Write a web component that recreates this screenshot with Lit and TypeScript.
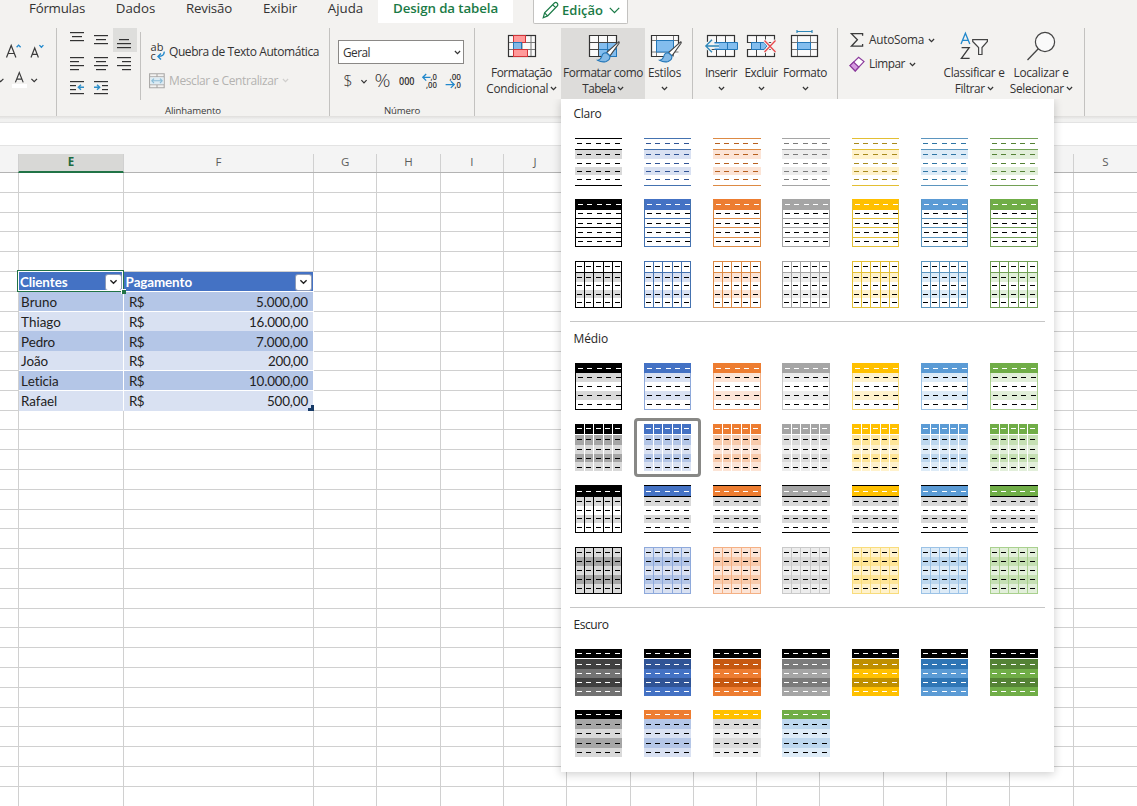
import { LitElement, html, svg, css, nothing } from "lit";
import { customElement, property } from "lit/decorators.js";
import { classMap } from "lit/directives/class-map.js";

/** A single-line caption whose tracking is adjusted to fill a given width. */
@customElement("ui-label")
class UiLabel extends LitElement {
  @property() text = "";
  @property({ type: Number }) w = 0;
  static styles = css`
    :host { display: inline-block; white-space: pre; flex: none; }
    .t { display: inline-block; font-kerning: none; font-variant-ligatures: none; }
  `;
  firstUpdated() {
    const el = this.renderRoot.querySelector(".t") as HTMLElement;
    const natural = el.getBoundingClientRect().width;
    if (!this.w || !natural) return;
    el.style.letterSpacing = `${(this.w - natural) / this.text.length}px`;
  }
  render() {
    return html`<span class="t">${this.text}</span>`;
  }
}

const label = (text: string, w: number) => html`<ui-label .text=${text} .w=${w}></ui-label>`;

/* ---------- table style thumbnails ---------- */

interface Accent { base: string; light: string; mid: string; edge: string; dark: string; ink: string; }

const ACCENTS: Accent[] = [
  { base: "#000", light: "#d9d9d9", mid: "#a6a6a6", edge: "#000", dark: "#404040", ink: "#000" },
  { base: "#4472c4", light: "#d9e1f2", mid: "#b4c6e7", edge: "#8ea9db", dark: "#305496", ink: "#305496" },
  { base: "#ed7d31", light: "#fce4d6", mid: "#f8cbad", edge: "#f4b084", dark: "#c65911", ink: "#b8601f" },
  { base: "#a5a5a5", light: "#ededed", mid: "#dbdbdb", edge: "#c9c9c9", dark: "#7b7b7b", ink: "#7b7b7b" },
  { base: "#ffc000", light: "#fff2cc", mid: "#ffe699", edge: "#f8dc7c", dark: "#bf8f00", ink: "#a98a1c" },
  { base: "#5b9bd5", light: "#ddebf7", mid: "#bdd7ee", edge: "#9bc2e6", dark: "#2f75b5", ink: "#2f75a5" },
  { base: "#70ad47", light: "#e2efda", mid: "#c6e0b4", edge: "#a9d08e", dark: "#548235", ink: "#548235" },
];
const LINES = ["#000", "#4472b0", "#dd8a44", "#a5a5a5", "#e3bf34", "#5b95bf", "#72a055"];
const WIDTHS = [47, 47, 48, 48, 47, 47, 48];

const box = (x: number, y: number, w: number, h: number, fill: string) =>
  svg`<rect x=${x} y=${y} width=${w} height=${h} fill=${fill}></rect>`;

const dashes = (y: number, fill: string, x0 = 2) =>
  [0, 9, 19, 28, 38].map((dx) => box(x0 + dx, y, 5, 1, fill));

const frame = (w: number, h: number, c: string) => [
  box(0, 0, w, 1, c), box(0, h - 1, w, 1, c), box(0, 0, 1, h, c), box(w - 1, 0, 1, h, c),
];

const verticals = (y: number, h: number, c: string) => [9, 18, 28, 37].map((x) => box(x, y, 1, h, c));

type Kind = "light1" | "light2" | "light3" | "medium1" | "medium2" | "medium3" | "medium4" | "dark1" | "dark2";

function thumb(kind: Kind, i: number) {
  const a = ACCENTS[i], w = WIDTHS[i], ln = LINES[i];
  switch (kind) {
    case "light1":
      return [box(0, 12, w, 9, a.light), box(0, 29, w, 8, a.light),
        box(0, 0, w, 1, ln), box(0, 11, w, 1, ln), box(0, 47, w, 1, ln),
        [5, 16, 25, 33, 41].map((y) => dashes(y, a.ink))];
    case "light2":
      return [box(0, 0, w, 11, a.base), frame(w, 48, i ? ln : "#000"), box(0, 0, w, 1, a.base),
        [19, 28, 38].map((y) => box(0, y, w, 1, ln)),
        dashes(5, "#fff", 3), [14, 24, 33, 42].map((y) => dashes(y, "#000", 3))];
    case "light3":
      return [box(0, 12, w, 9, a.light), box(0, 29, w, 8, a.light), frame(w, 47, ln),
        box(0, 11, w, 1, ln), verticals(0, 47, ln),
        [5, 16, 24, 33, 41].map((y) => dashes(y, "#000"))];
    case "medium1":
      return [box(0, 10, w, 9, a.light), box(0, 28, w, 9, a.light), frame(w, 47, a.edge),
        box(0, 0, w, 10, a.base),
        dashes(5, "#fff", 3), [14, 23, 32, 41].map((y) => dashes(y, "#000", 3))];
    case "medium2":
      return [box(0, 0, w, 10, a.base), box(0, 11, w, 10, a.mid), box(0, 21, w, 9, a.light),
        box(0, 30, w, 8, a.mid), box(0, 38, w, 9, a.light), verticals(0, 47, "#fff"),
        dashes(4, "#fff"), [15, 25, 34, 43].map((y) => dashes(y, "#000"))];
    case "medium3":
      return [box(0, 0, w, 11, a.base), box(0, 12, w, 9, "#d9d9d9"), box(0, 30, w, 8, "#d9d9d9"),
        box(0, 0, w, 1, "#000"), box(0, 11, w, 1, "#000"), box(0, 47, w, 1, "#000"),
        i === 0 ? [frame(w, 48, "#000"), verticals(12, 36, "#000")] : nothing,
        dashes(6, "#fff"), [16, 25, 33, 42].map((y) => dashes(y, "#000"))];
    case "medium4":
      return [box(0, 0, w, 47, a.light), box(0, 10, w, 9, a.mid), box(0, 28, w, 9, a.mid),
        frame(w, 47, a.edge), verticals(0, 47, a.edge),
        [5, 14, 23, 32, 41].map((y) => dashes(y, "#000"))];
    case "dark1": {
      const hi = i === 0 ? "#737373" : a.base;
      return [box(0, 0, w, 9, "#000"), box(0, 10, w, 10, a.dark), box(0, 20, w, 9, hi),
        box(0, 29, w, 9, a.dark), box(0, 38, w, 9, hi),
        [4, 15, 24, 33, 42].map((y) => dashes(y, "#fff"))];
    }
    case "dark2": {
      const head = ["#000", "#ed7d31", "#ffc000", "#70ad47"][i];
      const b = ACCENTS[[0, 1, 3, 5][i]];
      return [box(0, 0, w, 9, head), box(0, 9, w, 10, b.mid), box(0, 19, w, 9, b.light),
        box(0, 28, w, 10, b.mid), box(0, 38, w, 9, b.light),
        dashes(4, "#fff"), [14, 23, 33, 42].map((y) => dashes(y, "#000"))];
    }
  }
}

@customElement("style-gallery")
class StyleGallery extends LitElement {
  static styles = css`
    :host { display: block; box-sizing: border-box; width: 493px; height: 673px; background: #fff;
      box-shadow: 0 2px 9px rgba(0, 0, 0, 0.2); clip-path: inset(0 -14px -14px -14px); padding: 0 9px; }
    section { display: flow-root; border-bottom: 1px solid #c6c6c6; box-sizing: border-box; }
    .claro { height: 223px; }
    .medio { height: 286px; }
    .escuro { height: 160px; border: 0; }
    h3 { margin: 7px 0 0 3.5px; height: 16px; font: 400 12px/16px "Open Sans", "Noto Sans", sans-serif; color: #262626; }
    .medio h3 { margin-top: 9px; }
    .escuro h3 { margin-top: 9px; }
    .grid { display: grid; grid-template-columns: 69px 69px 69px 70px 69px 69px 48px; margin: 16px 0 0 5px; }
    .claro .grid { grid-template-rows: 61px 62px 48px; }
    .medio .grid { grid-template-rows: 61px 61px 62px 48px; }
    .escuro .grid { grid-template-rows: 61px 48px; }
    .item { display: block; width: 48px; height: 48px; }
    .item svg { display: block; shape-rendering: crispEdges; }
    .item.on { outline: 3px solid #888886; outline-offset: 0; width: 61px; height: 53px; margin: -3px 0 0 -7px;
      padding: 3px 0 0 7px; box-sizing: border-box; border-radius: 1px; }
  `;
  private section(name: string, cls: string, w: number, kinds: Kind[]) {
    return html`<section class=${cls}>
      <h3>${label(name, w)}</h3>
      <div class="grid">
        ${kinds.map((k) => (k === "dark2" ? [0, 1, 2, 3] : [0, 1, 2, 3, 4, 5, 6]).map(
          (i) => html`<div class=${classMap({ item: true, on: k === "medium2" && i === 1 })}>
            <svg width="48" height="48" viewBox="0 0 48 48">${thumb(k, i)}</svg>
          </div>`))}
      </div>
    </section>`;
  }
  render() {
    return html`
      ${this.section("Claro", "claro", 28, ["light1", "light2", "light3"])}
      ${this.section("Médio", "medio", 34.5, ["medium1", "medium2", "medium3", "medium4"])}
      ${this.section("Escuro", "escuro", 35, ["dark1", "dark2"])}`;
  }
}

/* ---------- ribbon ---------- */

const chev = (color = "#333") => html`<svg class="chev" width="7" height="5" viewBox="0 0 7 5">
  <path d="M.9 1 3.5 3.6 6.1 1" fill="none" stroke=${color} stroke-width="1.2"/></svg>`;

const hline = (x: number, y: number, w: number, c = "#333") => svg`<rect x=${x} y=${y} width=${w} height="1.2" fill=${c}></rect>`;

const alignIcons = [
  { on: false, art: [hline(5, 4, 14), hline(7, 8, 10), hline(5, 12, 14)] },
  { on: false, art: [hline(5, 7, 14), hline(7, 11, 10), hline(5, 15, 14)] },
  { on: true, art: [hline(6, 11, 10), hline(4, 15, 14), hline(4, 19, 14)] },
  { on: false, art: [hline(5, 5, 14), hline(5, 9, 9), hline(5, 13, 14), hline(5, 17, 9)] },
  { on: false, art: [hline(5, 5, 14), hline(7, 9, 10), hline(5, 13, 14), hline(7, 17, 10)] },
  { on: false, art: [hline(4, 5, 14), hline(9, 9, 9), hline(4, 13, 14), hline(9, 17, 9)] },
  { on: false, art: [hline(5, 5, 14), hline(5, 9, 6), hline(5, 13, 6), hline(5, 17, 14),
    svg`<path d="M19 11.3H13.5M16 8.8 13.3 11.3 16 13.8" fill="none" stroke="#2e8fc9" stroke-width="1.4"/>`] },
  { on: false, art: [hline(5, 5, 14), hline(13, 9, 6), hline(13, 13, 6), hline(5, 17, 14),
    svg`<path d="M5 11.3H10.5M8 8.8 10.7 11.3 8 13.8" fill="none" stroke="#2e8fc9" stroke-width="1.4"/>`] },
];

const brush = svg`
  <path d="M33.6 13.8 21.6 24.6 25 27.8 34 15.2Q34.6 13.6 33.6 13.8Z" fill="#fff" stroke="#444" stroke-width="1.1"/>
  <path d="M21.4 24.8Q17.6 24.6 16.8 28.4 15.6 31.8 12.6 32.2 17 34.8 21.2 33.4 25.6 31.6 24.8 27.8Z" fill="#83b9e6" stroke="#2477b8" stroke-width="1.1"/>`;

const icons = {
  conditional: svg`<rect x="4.5" y="7.5" width="27" height="21" fill="#fafafa"/>
    <path d="M9.5 7.5V28.5M18 7.5V28.5M27 7.5V28.5M4.5 14.5H31.5M4.5 21.5H31.5" stroke="#777" fill="none"/>
    <rect x="4.5" y="7.5" width="27" height="21" fill="none" stroke="#333" stroke-width="1.2"/>
    <rect x="9.5" y="7.5" width="12" height="7" fill="#ff9a9a" stroke="#d13438"/>
    <rect x="9.5" y="14.5" width="8" height="7" fill="#83b9e6" stroke="#2477b8"/>
    <rect x="9.5" y="21.5" width="14" height="7" fill="#ff9a9a" stroke="#d13438"/>`,
  table: svg`<rect x="4.5" y="7.5" width="27" height="21" fill="#fafafa"/>
    <rect x="13.5" y="14.5" width="18" height="14" fill="#83bdee" stroke="#2477b8"/>
    <path d="M13.5 7.5V28.5M22.5 7.5V14M4.5 14.5H31.5M4.5 21.5H13" stroke="#444" fill="none"/>
    <path d="M22.5 15V28M14 21.5H31" stroke="#2477b8"/>
    <path d="M20 28.5H4.5V7.5H31.5V16" fill="none" stroke="#333" stroke-width="1.2"/>${brush}`,
  styles: svg`<rect x="4.5" y="7.5" width="27" height="21" fill="#fafafa"/>
    <path d="M9.5 7.5V28.5M26.5 7.5V28.5M4.5 12.5H31.5M4.5 24H31.5" stroke="#777" fill="none"/>
    <rect x="9.5" y="12.5" width="17" height="11.5" fill="#83bdee" stroke="#2477b8"/>
    <path d="M20 28.5H4.5V7.5H31.5V16" fill="none" stroke="#333" stroke-width="1.2"/>${brush}`,
  insert: svg`<rect x="4.5" y="7.5" width="27" height="21" fill="#fafafa"/>
    <path d="M13.5 7.5V28.5M22.5 7.5V28.5M4.5 14.5H31.5M4.5 21.5H31.5" stroke="#444" fill="none"/>
    <rect x="4.5" y="7.5" width="27" height="21" fill="none" stroke="#333" stroke-width="1.2"/>
    <rect x="2" y="14" width="12" height="7" fill="#f3f2f0"/>
    <path d="M11.5 14.5H34.5V21.5H11.5M24.5 14.5V21.5" fill="#83bdee" stroke="#2477b8"/>
    <path d="M16 18H3M9 11.8 2.8 18 9 24.2" fill="none" stroke="#f3f2f0" stroke-width="3.4"/>
    <path d="M16 18H3M9 11.8 2.8 18 9 24.2" fill="none" stroke="#2d86b8" stroke-width="1.3"/>`,
  remove: svg`<path d="M4.5 7.5H31.5V28.5H4.5Z" fill="#fafafa"/>
    <path d="M13.5 7.5V28.5M22.5 7.5V28.5M4.5 14.5H31.5M4.5 21.5H31.5" stroke="#444" fill="none"/>
    <rect x="4.5" y="7.5" width="27" height="21" fill="none" stroke="#333" stroke-width="1.2"/>
    <rect x="2" y="15" width="7" height="6" fill="#f3f2f0"/>
    <rect x="24" y="15" width="9" height="6" fill="#f3f2f0"/>
    <path d="M8.5 14.5H21L24 18 21 21.5H8.5ZM17.5 14.5V21.5" fill="#83bdee" stroke="#2477b8"/>
    <path d="M21.5 12.5 32.5 24M32.5 12.5 21.5 24" stroke="#f3f2f0" stroke-width="3.6"/>
    <path d="M21.5 12.5 32.5 24M32.5 12.5 21.5 24" stroke="#e8484c" stroke-width="1.3"/>`,
  format: svg`<rect x="4.5" y="7.5" width="26" height="21" fill="#fafafa"/>
    <path d="M10.5 7.5V28.5M23.5 7.5V28.5M4.5 14.5H30.5M4.5 21.5H30.5" stroke="#777" fill="none"/>
    <rect x="4.5" y="7.5" width="26" height="21" fill="none" stroke="#333" stroke-width="1.2"/>
    <rect x="10.5" y="14.5" width="13" height="7" fill="#83bdee" stroke="#2477b8"/>
    <path d="M10 3.5H25M10 2V5M25 2V5" stroke="#2d86b8" stroke-width="1.2"/>`,
  sort: svg`<path d="M5 16 9.4 5.2 13.8 16M6.6 12.3H12.2" stroke="#2188cc" stroke-width="1.3"/>
    <path d="M5.6 19.6H13.2L5.4 30.3H13.6" stroke="#3b3b3b" stroke-width="1.3"/>
    <path d="M16.7 11.6H31.4V13.5L26 19.5V26.5H22.6V19.5L16.7 13.5Z" fill="#fafafa" stroke="#444" stroke-width="1.2"/>`,
  find: svg`<circle cx="22" cy="14" r="9.6" fill="#fafafa" stroke="#444" stroke-width="1.2"/>
    <path d="M15.3 20.8 4.5 32" stroke="#444" stroke-width="1.3"/>`,
};

const big = (art: unknown) => html`<svg class="big-icon" width="36" height="36" viewBox="0 0 36 36" fill="none">${art}</svg>`;

@customElement("excel-ribbon")
class ExcelRibbon extends LitElement {
  static styles = css`
    :host { display: block; background: #f3f2f0; color: #333;
      font: 400 11.8px/16px "Open Sans", "Noto Sans", sans-serif; }
    svg { display: block; flex: none; }
    .tabs { display: flex; height: 24px; padding-left: 18px; box-sizing: border-box; font-size: 13.3px; line-height: 17px; align-items: flex-start; }
    .tab { display: flex; justify-content: center; box-sizing: border-box; }
    .w78 { width: 78px; } .w79 { width: 79px; } .w68 { width: 68px; } .w74 { width: 74px; } .w57 { width: 57px; }
    .active { width: 135px; height: 23px; margin-left: 4px; background: #fff; color: #1a7a46; font-weight: 600; }
    .mode { display: flex; align-items: center; box-sizing: border-box; width: 95px; height: 24px; margin-left: 20px;
      padding: 0 7px 3px 8px; gap: 3px; background: #fff; border: 1px solid #c3c2c0; border-top: 0; border-radius: 0 0 2px 2px; color: #1a7a46; font-weight: 600; font-size: 13px; }
    .mode .down { margin-left: 3px; }
    .groups { display: flex; height: 93px; padding-top: 4px; box-sizing: border-box; border-bottom: 1px solid #e2e1df; }
    .group { position: relative; display: flex; box-sizing: border-box; height: 88px; border-right: 1px solid #c3c2c0; flex: none; }
    .name { font-size: 9.6px; line-height: 14px; text-align: center; color: #3a3a3a; flex: none; }
    .font { width: 57px; flex-direction: column; padding: 12px 0 0 5px; gap: 2px; }
    .font .row { display: flex; align-items: center; height: 24px; }
    .font .row.second { margin-left: -6px; }
    .align { width: 273px; flex-direction: column; }
    .align .body { display: flex; height: 76px; padding-left: 8px; flex: none; }
    .icons { display: grid; grid-template-columns: repeat(3, 24px); grid-template-rows: repeat(3, 24px); }
    .icons .on { background: #dededc; }
    .wrap { display: flex; flex-direction: column; margin: 4px 0 0 3px; padding: 8px 0 0 8px; height: 68px; border-left: 1px solid #c3c2c0; gap: 4.5px; box-sizing: border-box; }
    .wrap .row { display: flex; align-items: center; height: 24px; gap: 4px; line-height: 24px; font-size: 12px; flex: none; }
    .off { color: #b4b3b1; }
    .glyphs { display: grid; width: 16px; height: 20px; grid-template-rows: 9px 9px; font-size: 11px; line-height: 9px; letter-spacing: 0.2px; }
    .glyphs span { padding-left: 1.5px; }
    .glyphs .c { display: flex; gap: 1px; }
    .number { width: 145px; flex-direction: column; padding: 12px 0 0 8px; }
    .select { display: flex; align-items: center; justify-content: space-between; width: 126px; height: 24px; box-sizing: border-box; flex: none;
      border: 1px solid #8a8886; background: #fff; padding: 0 2px 0 4px; }
    .number .row { display: flex; align-items: center; height: 31px; padding-left: 5px; flex: none; }
    .number .name { margin: 9px 8px 0 0; }
    .number .row svg { overflow: visible; }
    .btn { display: flex; flex-direction: column; align-items: center; height: 71px; flex: none; }
    .line { display: flex; align-items: center; height: 16px; gap: 2px; }
    .line .chev { margin-right: -0.5px; margin-top: 1px; }
    .hot { background: #dddcda; }
    .styles { width: 218px; padding-left: 7px; }
    .cells { width: 145px; padding-left: 7px; }
    .edit { width: 247px; }
    .small { display: flex; flex-direction: column; width: 102px; padding-left: 11px; box-sizing: border-box; }
    .small .row { display: flex; align-items: center; height: 24px; gap: 4px; line-height: 15px; }
    .small ui-label { margin-top: -1px; }
    .b79 { width: 79px; } .b84 { width: 84px; } .b40 { width: 39px; } .b42 { width: 42px; } .b38 { width: 38px; } .b50 { width: 50px; } .b68 { width: 68px; } .b66 { width: 66px; }
  `;
  render() {
    return html`
      <nav class="tabs">
        <div class="tab w78">${label("Fórmulas", 56)}</div>
        <div class="tab w79">${label("Dados", 39.5)}</div>
        <div class="tab w68">${label("Revisão", 46)}</div>
        <div class="tab w74">${label("Exibir", 34)}</div>
        <div class="tab w57">${label("Ajuda", 35.5)}</div>
        <div class="tab active">${label("Design da tabela", 105)}</div>
        <div class="mode">
          <svg width="17" height="18" viewBox="0 0 17 18" fill="none" stroke="#1a7a46" stroke-width="1.2">
            <path d="M1.2 16.8 2.6 11.8 12.4 2Q13.8.9 15.2 2.2 16.4 3.7 15.2 5L5.6 14.9ZM10.8 3.8 13.6 6.6M2.6 11.8 5.6 14.9"/></svg>
          ${label("Edição", 41)}
          <svg class="down" width="11" height="7" viewBox="0 0 11 7"><path d="M.8.9 5.5 5.6 10.2.9" fill="none" stroke="#1a7a46" stroke-width="1.3"/></svg>
        </div>
      </nav>
      <div class="groups">
        <div class="group font">
          <div class="row">
            <svg width="40" height="20" viewBox="0 0 40 20" fill="none">
              <path d="M1.5 15.5 6.2 3.5 10.9 15.5M3.1 11.5H9.3" stroke="#3b3b3b" stroke-width="1.2"/>
              <path d="M11.6 5.2 13.6 3.1 15.6 5.2" stroke="#2188cc" stroke-width="1.3"/>
              <path d="M26 15.5 29.7 6 33.4 15.5M27.2 12.4H32.2" stroke="#3b3b3b" stroke-width="1.2"/>
              <path d="M34.4 3.1 36.4 5.2 38.4 3.1" stroke="#2188cc" stroke-width="1.3"/></svg>
          </div>
          <div class="row second">
            <svg width="40" height="24" viewBox="0 0 40 24" fill="none">
              <path d="M-1.2 12.8 1.6 15.6 4.4 12.8M32.4 12.8 35.2 15.6 38 12.8" stroke="#333" stroke-width="1.2"/>
              <path d="M16.4 16.4 20.3 6.6 24.2 16.4M17.8 13.2H22.8" stroke="#3b3b3b" stroke-width="1.2"/>
              <rect x="13" y="18" width="15" height="4" fill="#fff"/></svg>
          </div>
        </div>

        <div class="group align">
          <div class="body">
            <div class="icons">${alignIcons.map((a) => html`<div class=${classMap({ on: a.on })}><svg width="24" height="24" viewBox="0 0 24 24">${a.art}</svg></div>`)}</div>
            <div class="wrap">
              <div class="row">
                <div class="glyphs">
                  <span>ab</span>
                  <span class="c">c<svg width="8" height="10" viewBox="0 0 8 10"><path d="M7.2 .6Q7.4 5.4 1.2 5.4M4 2.4 1 5.4 4 8.4" fill="none" stroke="#2188cc" stroke-width="1.4"/></svg></span>
                </div>
                ${label("Quebra de Texto Automática", 150)}
              </div>
              <div class="row off">
                <svg width="16" height="16" viewBox="0 0 16 16" fill="none">
                  <path d="M.6.8H15.2V14.8H.6ZM.6 3.8H15.2M.6 11.8H15.2M8 .8V3.8M8 11.8V14.8" stroke="#a9a8a6" stroke-width="1.1"/>
                  <rect x="1.2" y="4.4" width="13.4" height="6.8" fill="#dcebf3"/>
                  <path d="M2.8 7.8H13.2M5 5.6 2.8 7.8 5 10M11 5.6 13.2 7.8 11 10" stroke="#8bbcd6" stroke-width="1.1"/></svg>
                ${label("Mesclar e Centralizar", 109)}${chev("#d0cfcd")}
              </div>
            </div>
          </div>
          <div class="name">${label("Alinhamento", 56)}</div>
        </div>

        <div class="group number">
          <div class="select">${label("Geral", 27)}${chev()}</div>
          <div class="row">
            <svg width="120" height="24" viewBox="0 -3 120 24" font-family="Open Sans, sans-serif" fill="#333">
              <text x=".5" y="16" font-size="17" font-weight="300" textLength="9" lengthAdjust="spacingAndGlyphs">$</text>
              <path d="M18.4 9.2 21 11.8 23.6 9.2" fill="none" stroke="#333" stroke-width="1.2"/>
              <text x="31.5" y="16.4" font-size="17.5" font-weight="300" textLength="16" lengthAdjust="spacingAndGlyphs">%</text>
              <text x="56" y="13.6" font-size="10" font-weight="600" textLength="15.5" lengthAdjust="spacingAndGlyphs">000</text>
              <text x="87.5" y="9.2" font-size="8.6" font-weight="600" textLength="6.5" lengthAdjust="spacingAndGlyphs">,0</text>
              <text x="83" y="17.2" font-size="8.6" font-weight="600" textLength="11" lengthAdjust="spacingAndGlyphs">,00</text>
              <path d="M87.5 6.3H80M83.2 3 79.8 6.3 83.2 9.6" fill="none" stroke="#2188cc" stroke-width="1.3"/>
              <text x="106.5" y="9.2" font-size="8.6" font-weight="600" textLength="11.5" lengthAdjust="spacingAndGlyphs">,00</text>
              <text x="111.5" y="17.2" font-size="8.6" font-weight="600" textLength="6.5" lengthAdjust="spacingAndGlyphs">,0</text>
              <path d="M102.6 13.6H111M107.8 10.3 111.2 13.6 107.8 16.9" fill="none" stroke="#2188cc" stroke-width="1.3"/>
            </svg>
          </div>
          <div class="name">${label("Número", 36)}</div>
        </div>

        <div class="group styles">
          <div class="btn b79">${big(icons.conditional)}
            <div class="line">${label("Formatação", 61)}</div>
            <div class="line">${label("Condicional", 62)}${chev()}</div></div>
          <div class="btn b84 hot">${big(icons.table)}
            <div class="line">${label("Formatar como", 80)}</div>
            <div class="line">${label("Tabela", 33)}${chev()}</div></div>
          <div class="btn b40">${big(icons.styles)}
            <div class="line">${label("Estilos", 33)}</div>
            <div class="line">${chev()}</div></div>
        </div>

        <div class="group cells">
          <div class="btn b42">${big(icons.insert)}
            <div class="line">${label("Inserir", 32)}</div>
            <div class="line">${chev()}</div></div>
          <div class="btn b38">${big(icons.remove)}
            <div class="line">${label("Excluir", 33)}</div>
            <div class="line">${chev()}</div></div>
          <div class="btn b50">${big(icons.format)}
            <div class="line">${label("Formato", 44)}</div>
            <div class="line">${chev()}</div></div>
        </div>

        <div class="group edit">
          <div class="small">
            <div class="row">
              <svg width="16" height="16" viewBox="0 0 16 16"><path d="M13.6 3.8V1.7H2.4L8.4 7.8 2.4 14.2H13.6V12" fill="none" stroke="#3b3b3b" stroke-width="1.3"/></svg>
              ${label("AutoSoma", 55)}${chev()}
            </div>
            <div class="row">
              <svg width="16" height="16" viewBox="0 0 16 16"><path d="M1 9.6 9.6 1.2 15 5.6 6.2 15Z" fill="#fff" stroke="#8b3a9c" stroke-width="1.2"/>
                <path d="M1 9.6 4.6 6 9.8 11 6.2 15Z" fill="#d59be0" stroke="#8b3a9c" stroke-width="1.2"/></svg>
              ${label("Limpar", 36)}${chev()}
            </div>
          </div>
          <div class="btn b68">${big(icons.sort)}
            <div class="line">${label("Classificar e", 61)}</div>
            <div class="line">${label("Filtrar", 30)}${chev()}</div></div>
          <div class="btn b66">${big(icons.find)}
            <div class="line">${label("Localizar e", 55)}</div>
            <div class="line">${label("Selecionar", 54)}${chev()}</div></div>
        </div>
      </div>`;
  }
}

/* ---------- sheet ---------- */

const COLS = ["", "E", "F", ..."GHIJKLMNOPQRS".split("")];
const ROWS = 32;
const TABLE_START = 5;
const DATA: [string, number, string, number][] = [
  ["Bruno", 36, "5.000,00", 52],
  ["Thiago", 40, "16.000,00", 59],
  ["Pedro", 34, "7.000,00", 52],
  ["João", 27, "200,00", 40],
  ["Leticia", 37.5, "10.000,00", 59],
  ["Rafael", 36, "500,00", 41],
];

@customElement("excel-sheet")
class ExcelSheet extends LitElement {
  static styles = css`
    :host { display: block; position: relative; }
    .cols { display: grid; height: 27px; padding-top: 8px; box-sizing: border-box; background: #f4f4f4; border-bottom: 1px solid #b3b3b3; }
    .cols, .row { grid-template-columns: 19px 105px 190px repeat(13, minmax(0, 1fr)); }
    .col { border-right: 1px solid #d0d0d0; text-align: center; font: 400 11.5px/16px "Open Sans", "Noto Sans", sans-serif; color: #5c5c5c; box-sizing: border-box; height: 18px; }
    .col.on { background: #d8d8d6; color: #1e6b41; font-weight: 700; height: 19px; margin-left: -1px; border-left: 1px solid #d0d0d0; border-bottom: 2px solid #217346; }
    .row { display: grid; height: 19.8px; }
    .cell { box-sizing: border-box; border-right: 1px solid #d0d0d0; border-bottom: 1px solid #d0d0d0; font: 400 13.4px/18px Lato, "Open Sans", sans-serif; color: #222; }
    .cell:last-child, .col:last-child { border-right: 0; }
    .t { display: flex; justify-content: space-between; align-items: center; border-color: #fff; padding: 1.2px 5px 0 5px; }
    .t.name { padding-left: 2px; }
    .odd { background: #b4c6e7; }
    .even { background: #d9e1f2; }
    .head { background: #4472c4; color: #fff; font-weight: 700; padding: 1.5px 2px 0 1.5px; }
    .head.name { padding-left: 1px; }
    .filter { display: grid; place-items: center; width: 15px; height: 15px; margin-top: -0.5px; background: #fff; border-radius: 2px; box-shadow: 0 0 0 1px #8e9cb8; }
    .last { border-bottom-color: #d9e1f2; }
    .selection { position: absolute; left: 17px; top: 124px; width: 105px; height: 20px; border: 1px solid #217346; box-shadow: inset 0 0 0 1px #fff; }
    .handle { position: absolute; right: -3px; bottom: -3px; width: 4px; height: 4px; background: #217346; border: 1px solid #fff; border-width: 1px 0 0 1px; }
    .corner { position: absolute; left: 308px; top: 259px; }
  `;
  private arrow = html`<span class="filter"><svg width="9" height="6" viewBox="0 0 9 6"><path d="M1.4 1.2 4.5 4.3 7.6 1.2" fill="none" stroke="#222" stroke-width="1.4"/></svg></span>`;

  private cell(r: number, c: number) {
    const k = r - TABLE_START;
    if (k >= 0 && k <= DATA.length && (c === 1 || c === 2)) {
      if (k === 0) {
        return html`<div class=${classMap({ cell: true, t: true, head: true, name: c === 1 })}>
          ${c === 1 ? label("Clientes", 47.5) : label("Pagamento", 66.5)}${this.arrow}</div>`;
      }
      const [name, nw, value, vw] = DATA[k - 1];
      const cls = classMap({ cell: true, t: true, name: c === 1, odd: k % 2 === 1, even: k % 2 === 0, last: k === DATA.length });
      return c === 1
        ? html`<div class=${cls}>${label(name, nw)}</div>`
        : html`<div class=${cls}>${label("R$", 15)}${label(value, vw)}</div>`;
    }
    return html`<div class="cell"></div>`;
  }
  render() {
    return html`
      <div class="cols">${COLS.map((c) => html`<div class=${classMap({ col: true, on: c === "E" })}>${c}</div>`)}</div>
      ${Array.from({ length: ROWS }, (_, r) => html`<div class="row">${COLS.map((_c, c) => this.cell(r, c))}</div>`)}
      <div class="selection"><div class="handle"></div></div>
      <svg class="corner" width="6" height="6" viewBox="0 0 6 6"><path d="M3 0H6V6H0V3H3Z" fill="#173a66"/></svg>`;
  }
}

@customElement("app-root")
class AppRoot extends LitElement {
  static styles = css`
    :host { display: block; position: relative; width: 1137px; height: 806px; overflow: hidden; background: #fff; }
    .shade { height: 5px; background: linear-gradient(#e4e3e2, #f1f1f0 50%); }
    .formula { height: 24px; box-sizing: border-box; background: #fff; border-top: 1px solid #e3e3e3; border-bottom: 1px solid #e3e3e3; }
    .menu { position: absolute; left: 561px; top: 99px; }
  `;
  render() {
    return html`
      <excel-ribbon></excel-ribbon>
      <div class="shade"></div>
      <div class="formula"></div>
      <excel-sheet></excel-sheet>
      <style-gallery class="menu"></style-gallery>`;
  }
}
